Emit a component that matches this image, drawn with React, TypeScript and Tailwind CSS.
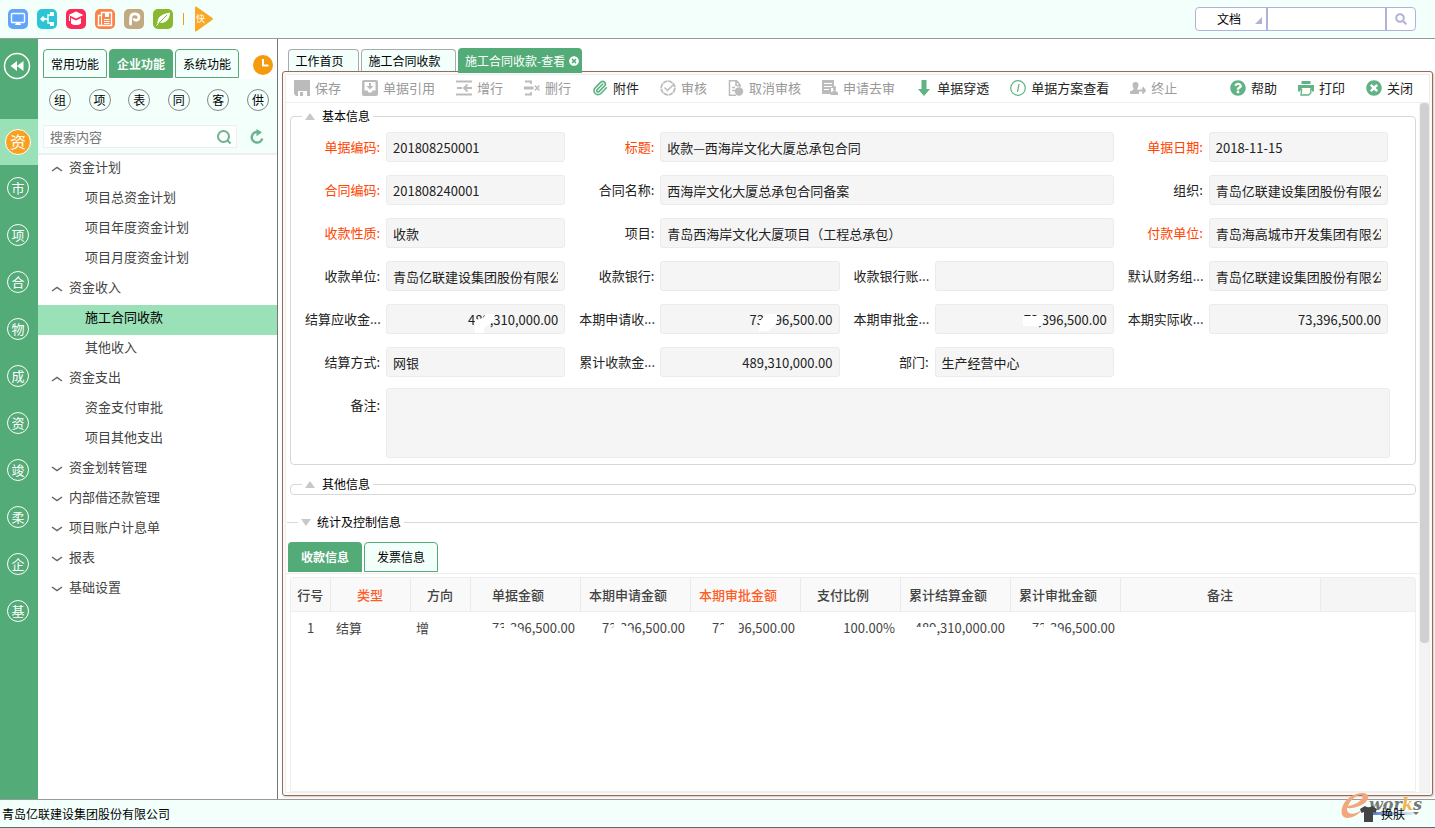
import { ReactNode } from "react";
import clsx from "clsx";
import { Paperclip } from "lucide-react";
import { FaQuestionCircle, FaTimesCircle } from "react-icons/fa";

const railItems = ["市", "项", "合", "物", "成", "资", "竣", "柔", "企", "基"];
const quickItems = ["组", "项", "表", "同", "客", "供"];

const tree = [
    { title: "资金计划", open: true, children: ["项目总资金计划", "项目年度资金计划", "项目月度资金计划"] },
    { title: "资金收入", open: true, children: ["施工合同收款", "其他收入"] },
    { title: "资金支出", open: true, children: ["资金支付审批", "项目其他支出"] },
    { title: "资金划转管理", open: false, children: [] },
    { title: "内部借还款管理", open: false, children: [] },
    { title: "项目账户计息单", open: false, children: [] },
    { title: "报表", open: false, children: [] },
    { title: "基础设置", open: false, children: [] },
];

type FieldData = {
    label: string;
    value: string;
    required?: boolean;
    wide?: boolean;
    number?: boolean;
    mask?: string;
};

const fields: FieldData[] = [
    { label: "单据编码:", value: "201808250001", required: true },
    { label: "标题:", value: "收款—西海岸文化大厦总承包合同", required: true, wide: true },
    { label: "单据日期:", value: "2018-11-15", required: true },
    { label: "合同编码:", value: "201808240001", required: true },
    { label: "合同名称:", value: "西海岸文化大厦总承包合同备案", wide: true },
    { label: "组织:", value: "青岛亿联建设集团股份有限公司" },
    { label: "收款性质:", value: "收款", required: true },
    { label: "项目:", value: "青岛西海岸文化大厦项目（工程总承包）", wide: true },
    { label: "付款单位:", value: "青岛海高城市开发集团有限公司", required: true },
    { label: "收款单位:", value: "青岛亿联建设集团股份有限公司" },
    { label: "收款银行:", value: "" },
    { label: "收款银行账...", value: "" },
    { label: "默认财务组...", value: "青岛亿联建设集团股份有限公司" },
    { label: "结算应收金...", value: "489,310,000.00", number: true, mask: "20,16 28,14 31,10 40,10 38,18 29,24 29,29 20,29" },
    { label: "本期申请收...", value: "73,396,500.00", number: true, mask: "30,17 36,10 47,10 47,19 38,27 29,27" },
    { label: "本期审批金...", value: "73,396,500.00", number: true, mask: "19,12 40,12 40,18 37,22 19,22" },
    { label: "本期实际收...", value: "73,396,500.00", number: true },
    { label: "结算方式:", value: "网银" },
    { label: "累计收款金...", value: "489,310,000.00", number: true },
    { label: "部门:", value: "生产经营中心" },
];

const columns = [
    { title: "行号", width: "w-[39px]" },
    { title: "类型", width: "w-[80px]", required: true },
    { title: "方向", width: "w-[60px]" },
    { title: "单据金额", width: "w-[110px]", number: true },
    { title: "本期申请金额", width: "w-[110px]", number: true },
    { title: "本期审批金额", width: "w-[110px]", required: true, number: true },
    { title: "支付比例", width: "w-[100px]", number: true },
    { title: "累计结算金额", width: "w-[110px]", number: true },
    { title: "累计审批金额", width: "w-[110px]", number: true },
    { title: "备注", width: "w-[200px]" },
];

const amounts = [
    { value: "73,396,500.00", mask: "20,16 34,16 34,10 38,10 40,15 48,15 53,19 49,28 20,28" },
    { value: "73,396,500.00", mask: "29,16 34,15 34,10 41,10 42,14 50,14 53,19 48,28 26,28" },
    { value: "73,396,500.00", mask: "28,15 34,14 34,8 48,8 50,15 46,28 24,28" },
    { value: "100.00%", mask: "" },
    { value: "489,310,000.00", mask: "14,15 37,15 37,26 14,26" },
    { value: "73,396,500.00", mask: "20,15 34,15 34,10 38,10 40,15 48,15 53,19 49,28 20,28" },
];

function Tile({ className, children }: { className: string; children: ReactNode }) {
    return (
        <button className={clsx("w-5 h-5 rounded-[5px]", className)}>
            <svg viewBox="0 0 20 20" className="w-5 h-5" fill="none" stroke="white">
                {children}
            </svg>
        </button>
    );
}

function TopBar() {
    return (
        <header className="flex items-center justify-between shrink-0 h-[39px] pl-2 pr-[19px] bg-[#f2fffb] border-b border-[#999]">
            <div className="flex items-center gap-[9px]">
                <Tile className="bg-[#63a4fb]">
                    <rect x="3.5" y="4.5" width="13" height="9" rx="1" strokeWidth="1.4" />
                    <path d="M8 14h4l1 2H7z" fill="white" stroke="none" />
                </Tile>
                <Tile className="bg-[#2cc5d5]">
                    <path d="M3 10l3-3 3 3-3 3z" fill="white" stroke="none" />
                    <path d="M8 10h3M15 6h-4v8h4" strokeWidth="1.4" />
                    <path d="M13 3h4v4h-4zM13 13h4v4h-4z" fill="white" stroke="none" />
                </Tile>
                <Tile className="bg-[#fb2a58]">
                    <path d="M10 2.5l7.5 3.5-7.5 3.5L2.5 6zM5 9l5 2.4L15 9v5.5c-2.5 2-7.5 2-10 0z" fill="white" stroke="none" />
                    <path d="M3.5 7v5" />
                </Tile>
                <Tile className="bg-[#fa8348]">
                    <path d="M3.5 16V6.5h3V3.5h10v13h-13z" strokeWidth="1.4" />
                    <path d="M6.5 6v10M9 10.5h5.5M9 12.5h5.5M9 14.5h5.5" />
                    <path d="M10 4h4v4h-4z" fill="white" stroke="none" />
                </Tile>
                <Tile className="bg-[#c1a981]">
                    <path d="M6.5 15c.3-3 0-5 .3-7 .6-4.500 8.200-4 8.200.2 0 3-3 3.800-4.800 2.300" strokeWidth="2.8" strokeLinecap="round" />
                </Tile>
                <Tile className="bg-[#88b830]">
                    <path d="M4.5 15c-.5-6 3-10 12.5-11.5C17 11 12 15 6.5 13.5z" fill="white" stroke="none" />
                    <path d="M3.5 16.5L14 6" stroke="#88b830" />
                    <path d="M3.5 16.5l2-2" />
                </Tile>
                <span className="w-px h-3 ml-px bg-[#f09a1a]" />
                <button aria-label="快捷" className="w-5 h-[26px] ml-px">
                    <svg viewBox="0 0 20 26" className="w-5 h-[26px]">
                        <path d="M1 1.5q0-1.5 1.5-.7L18.500 12q1 .9 0 1.8L2.5 25.2q-1.5.8-1.5-.7z" fill="#f9a825" />
                        <text x="2" y="16" fontSize="9" fill="white">快</text>
                    </svg>
                </button>
            </div>
            <form className="flex h-6 text-xs bg-white border border-[#b0b3d9] rounded-[4px]">
                <div className="flex items-end w-[72px] pr-1 border-r-2 border-[#b0b3d9]">
                    <select aria-label="搜索类型" className="appearance-none flex-1 h-full pl-[21px] outline-none">
                        <option>文档</option>
                    </select>
                    <svg viewBox="0 0 7 7" className="w-[7px] h-[7px] mb-1.5">
                        <path d="M7 0v7H0z" fill="#b0b3d9" />
                    </svg>
                </div>
                <input aria-label="搜索" className="w-[119px] px-1 outline-none border-r-2 border-[#b0b3d9]" />
                <button type="button" aria-label="查找" className="flex items-center justify-center w-7 text-[#b0b3d9]">
                    <svg viewBox="0 0 12 12" className="w-3 h-3" fill="none" stroke="currentColor" strokeWidth="2">
                        <circle cx="5" cy="5" r="3.8" />
                        <path d="M8 8l3.3 3.3" />
                    </svg>
                </button>
            </form>
        </header>
    );
}

function Rail() {
    return (
        <nav className="flex flex-col shrink-0 w-[38px] bg-[#53ab77] text-white">
            <button aria-label="收起" className="flex justify-center items-start h-20 pt-[13px] pr-1">
                <svg viewBox="0 0 28 28" className="w-7 h-7" fill="none" stroke="white">
                    <circle cx="14" cy="14" r="12.5" strokeWidth="1.5" />
                    <path d="M14 9v10l-6.5-5zM20.5 9v10L14 14z" fill="white" stroke="none" />
                </svg>
            </button>
            <button className="flex items-center justify-center h-[46px] bg-[#9be1b8]">
                <span className="flex items-center justify-center w-[26px] h-[26px] pb-0.5 mr-0.5 text-base leading-none rounded-full border border-white bg-[#f9a01f]">资</span>
            </button>
            {railItems.map((item) => (
                <button key={item} className="flex items-center justify-center h-[47px] pb-0.5">
                    <span className="flex items-center justify-center w-[22px] h-[22px] mr-0.5 text-[13px] leading-none rounded-full border border-white">{item}</span>
                </button>
            ))}
        </nav>
    );
}

function Chevron({ open }: { open: boolean }) {
    return (
        <svg viewBox="0 0 12 6" className="w-3 h-1.5 mt-1" fill="none" stroke="#666" strokeWidth="1.5">
            <path d={open ? "M1 5l5-3.5L11 5" : "M1 1l5 3.5L11 1"} />
        </svg>
    );
}

function Sidebar() {
    return (
        <aside className="flex flex-col shrink-0 w-[240px] bg-white border-r border-[#777]">
            <div className="flex items-end h-10 pb-px pl-[5px] gap-0.5 text-xs">
                <button className="w-16 h-[29px] border border-[#53ab77] rounded-t-[4px] bg-[#f2fffb]">常用功能</button>
                <button className="w-16 h-[29px] border border-[#53ab77] rounded-t-[4px] bg-[#53ab77] text-white font-bold">企业功能</button>
                <button className="w-16 h-[29px] border border-[#53ab77] rounded-t-[4px] bg-[#f2fffb]">系统功能</button>
                <button aria-label="历史" className="w-5 h-5 mb-[3px] ml-3">
                    <svg viewBox="0 0 20 20" className="w-5 h-5">
                        <circle cx="10" cy="10" r="10" fill="#f59a0c" />
                        <path d="M10 4v6.5h5.5" fill="none" stroke="white" strokeWidth="2" />
                    </svg>
                </button>
            </div>
            <div className="h-[76px] pt-2.5 bg-[#f2fffb] border-b-2 border-[#eee]">
                <div className="flex justify-between pl-[11px] pr-2">
                    {quickItems.map((item) => (
                        <button key={item} className="flex items-center justify-center w-[22px] h-[22px] text-xs leading-none border border-[#888] rounded-full">{item}</button>
                    ))}
                </div>
                <div className="flex items-center mt-3.5 pl-[5px] pr-3">
                    <div className="flex items-center flex-1 h-[23px] pl-1.5 pr-1 bg-white border border-[#eee]">
                        <input aria-label="搜索内容" placeholder="搜索内容" className="flex-1 min-w-0 text-[13px] outline-none placeholder:text-[#777]" />
                        <svg viewBox="0 0 16 16" className="w-4 h-4" fill="none" stroke="#6ab48c" strokeWidth="2">
                            <circle cx="7.5" cy="7.5" r="5.5" />
                            <path d="M11.5 11.5l3 3" />
                        </svg>
                    </div>
                    <button aria-label="刷新" className="w-4 h-4 ml-3">
                        <svg viewBox="0 0 16 16" className="w-4 h-4" fill="none" stroke="#6ab48c" strokeWidth="2.5">
                            <path d="M13.2 9.5a5.3 5.3 0 1 1-4.7-6.5" />
                            <path d="M7.5 0l5.5 3.2-5.5 4z" fill="#6ab48c" stroke="none" />
                        </svg>
                    </button>
                </div>
            </div>
            <ul className="text-[13px] text-[#444]">
                {tree.map((group) => (
                    <li key={group.title}>
                        <button className="flex items-center w-full h-[30px] pb-1.5 pl-[13px] gap-1.5">
                            <Chevron open={group.open} />
                            {group.title}
                        </button>
                        {group.children.map((child) => (
                            <a
                                key={child}
                                href="#"
                                className={clsx("flex items-center h-[30px] pb-1.5 pl-[47px]", child === "施工合同收款" && "bg-[#9be1b8] text-black")}
                            >
                                {child}
                            </a>
                        ))}
                    </li>
                ))}
            </ul>
        </aside>
    );
}

function Tool({ label, disabled, children }: { label: string; disabled?: boolean; children: ReactNode }) {
    return (
        <button disabled={disabled} className={clsx("flex items-center gap-[5px]", disabled ? "text-[#999]" : "text-[#222]")}>
            <span className={clsx("flex items-center justify-center w-4 h-4 text-base", disabled ? "text-[#bbb]" : "text-[#5fb384]")}>{children}</span>
            {label}
        </button>
    );
}

function Glyph({ children }: { children: ReactNode }) {
    return (
        <svg viewBox="0 0 16 16" className="w-4 h-4" fill="none" stroke="currentColor" strokeWidth="1.5">
            {children}
        </svg>
    );
}

function Toolbar() {
    return (
        <div className="flex items-center justify-between shrink-0 h-7 pb-0.5 pl-2 pr-4 text-[13px] whitespace-nowrap border-b border-[#eee]">
            <div className="flex gap-[21px]">
                <Tool label="保存" disabled>
                    <Glyph>
                        <path fillRule="evenodd" d="M0 0h16v16h-3v-5H4v5H2l-2-2zM6 12h3v4H6z" fill="currentColor" stroke="none" />
                    </Glyph>
                </Tool>
                <Tool label="单据引用" disabled>
                    <Glyph>
                        <path fillRule="evenodd" d="M2 0h12q2 0 2 2v12q0 2-2 2H2q-2 0-2-2V2q0-2 2-2zM2.5 2v8.5h3l1 2h3l1-2h3V2zM7 3h2v3h2.5L8 9.5 4.5 6H7z" fill="currentColor" stroke="none" />
                    </Glyph>
                </Tool>
                <Tool label="增行" disabled>
                    <Glyph>
                        <path d="M0 1.5h16M0 14.5h16M1 8h5M8 8h8M11.5 4.5L8 8l3.5 3.5" strokeWidth="1.8" />
                    </Glyph>
                </Tool>
                <Tool label="删行" disabled>
                    <Glyph>
                        <path d="M1 1.5h6v2.5M7 12v2.5H1" strokeWidth="1.8" />
                        <path d="M0 8h9.500" strokeWidth="3" />
                        <path d="M11 5.5l4.5 5M15.5 5.5l-4.5 5" strokeWidth="1.5" />
                    </Glyph>
                </Tool>
                <Tool label="附件">
                    <Paperclip size={16} strokeWidth={2.5} />
                </Tool>
                <Tool label="审核" disabled>
                    <Glyph>
                        <circle cx="8" cy="8" r="6.800" strokeDasharray="4.700 .6" strokeWidth="1.800" />
                        <path d="M4.500 7.500l3 3L13 5" />
                    </Glyph>
                </Tool>
                <Tool label="取消审核" disabled>
                    <Glyph>
                        <path d="M8 15.200H1.500V.8h7l3.500 4V7M8 1v4.500h4M4 7.500h3M4 10.500h3" />
                        <circle cx="11" cy="11.500" r="4.200" fill="currentColor" stroke="none" />
                    </Glyph>
                </Tool>
                <Tool label="申请去审" disabled>
                    <Glyph>
                        <path fillRule="evenodd" d="M0 0h12v8H9v6H0zM2 3v1h8V3zM2 6v1h8V6zM2 9v1h5V9z" fill="currentColor" stroke="none" />
                        <path d="M11 7.500a1.500 1.500 0 0 1 3 0L13.500 11l2.500 1.500V15H8.500v-2.500l3-1.500z" fill="currentColor" stroke="none" />
                    </Glyph>
                </Tool>
                <Tool label="单据穿透">
                    <Glyph>
                        <path d="M5.500 0h5v9H14l-6 7-6-7h3.500z" fill="currentColor" stroke="none" />
                    </Glyph>
                </Tool>
                <Tool label="单据方案查看">
                    <Glyph>
                        <circle cx="8" cy="8" r="7.300" strokeWidth="1.200" />
                        <path d="M9 4L7.500 12" strokeWidth="1.300" />
                    </Glyph>
                </Tool>
                <Tool label="终止" disabled>
                    <Glyph>
                        <path d="M2.500 5a3 3 0 0 1 6 0c0 2-1.200 3-1.200 4.500l1.700.5v4H0v-2.500l3.700-2C3.700 8 2.500 7 2.500 5z" fill="currentColor" stroke="none" />
                        <path d="M9 10.500h6M12.500 7.500l2.500 3-2.500 3" strokeWidth="2" />
                    </Glyph>
                </Tool>
            </div>
            <div className="flex gap-[21px]">
                <Tool label="帮助">
                    <FaQuestionCircle />
                </Tool>
                <Tool label="打印">
                    <Glyph>
                        <path d="M3.500 1h9v3h-9zM0 5h16v6.500h-2L12.500 8h-9L2 11.500H0z" fill="currentColor" stroke="none" />
                        <path d="M3.700 8.500L3 15h7.500l2.300-2V8.500" strokeWidth="1.300" />
                    </Glyph>
                </Tool>
                <Tool label="关闭">
                    <FaTimesCircle />
                </Tool>
            </div>
        </div>
    );
}

function Legend({ title, down }: { title: string; down?: boolean }) {
    return (
        <legend className={clsx("flex items-center h-[18px] ml-[11px] px-[3px] text-xs", down ? "gap-1.5" : "gap-[7px]")}>
            <svg viewBox="0 0 10 7" className="w-2.5 h-[7px]">
                <path d={down ? "M0 0h10L5 7z" : "M0 7h10L5 0z"} fill="#c8c8c8" />
            </svg>
            {title}
        </legend>
    );
}

function Mask({ points, className }: { points: string; className: string }) {
    return (
        <svg className={clsx("absolute top-0 right-0 w-[110px]", className)} fill="white">
            <polygon points={points} />
        </svg>
    );
}

function Field({ field, id }: { field: FieldData; id: string }) {
    return (
        <div className={clsx("flex gap-1.5", field.wide && "col-span-2")}>
            <label htmlFor={id} className={clsx("w-[75px] shrink-0 leading-[29px] text-right whitespace-nowrap", field.required && "text-[#ff4500]")}>
                {field.label}
            </label>
            <div className="relative flex-1 min-w-0">
                <input
                    id={id}
                    readOnly
                    value={field.value}
                    className={clsx("w-full h-[30px] px-1.5 bg-[#f5f5f5] border border-[#ebebeb] rounded-[3px] outline-none", field.number && "text-right")}
                />
                {field.mask && <Mask points={field.mask} className="h-[30px]" />}
            </div>
        </div>
    );
}

function DetailTable() {
    return (
        <div className="flex-1 min-h-0 ml-1 mr-[3px] mt-[3px] overflow-hidden border border-[#eee] rounded-t-[3px] text-[13px] text-[#444]">
            <table className="w-full table-fixed">
                <thead>
                    <tr className="h-[33px] bg-[#f9f9f9] border-b border-[#eee]">
                        {columns.map((col) => (
                            <th
                                key={col.title}
                                className={clsx("p-0 font-medium border-r border-[#eaeaea]", col.width, col.number && "pr-3.5", col.required && "text-[#ff5c26]")}
                            >
                                {col.title}
                            </th>
                        ))}
                        <th className="bg-[#f5f5f5]" />
                    </tr>
                </thead>
                <tbody>
                    <tr className="h-8">
                        <td className="text-center">1</td>
                        <td className="pl-1.5">结算</td>
                        <td className="pl-1.5">增</td>
                        {amounts.map((amount, i) => (
                            <td key={i} className="relative pr-[5px] text-right">
                                {amount.value}
                                {amount.mask && <Mask points={amount.mask} className="h-8" />}
                            </td>
                        ))}
                        <td />
                        <td />
                    </tr>
                </tbody>
            </table>
        </div>
    );
}

function Main() {
    return (
        <main className="flex flex-col flex-1 min-w-0 pl-1 pr-0.5 pb-[3px] bg-white">
            <div className="flex items-end shrink-0 h-8 pl-1.5 gap-0.5 text-xs">
                <button className="h-[22px] w-[71px] pr-2 border border-b-0 border-[#aaa] rounded-t-[4px] bg-[#f2fffb]">工作首页</button>
                <button className="h-[22px] w-[95px] pr-2 border border-b-0 border-[#aaa] rounded-t-[4px] bg-[#f2fffb]">施工合同收款</button>
                <button className="relative flex items-center h-[25px] w-[124px] pl-[7px] gap-1 -mb-0.5 rounded-t-[4px] bg-[#53ab77] text-white whitespace-nowrap">
                    施工合同收款-查看
                    <FaTimesCircle className="text-[10px]" />
                </button>
            </div>
            <div className="flex flex-col flex-1 min-h-0 p-0.5 bg-[#fcf9f6] border border-[#8c6f62] rounded-[3px] shadow-[1px_1px_2px_#d8c8bc]">
                <div className="flex flex-col flex-1 min-h-0 bg-white border border-[#eee]">
                    <Toolbar />
                    <div className="flex flex-1 min-h-0">
                        <div className="flex flex-col flex-1 min-w-0">
                            <fieldset className="shrink-0 ml-1 mr-[3px] mt-1 pb-1.5 border border-[#d8d8d8] rounded-[4px]">
                                <Legend title="基本信息" />
                                <div className="pl-3.5 pr-[27px] pt-[7px] text-[13px] text-[#222]">
                                    <div className="grid grid-cols-4 gap-x-3.5 gap-y-[13px]">
                                        {fields.map((field, i) => (
                                            <Field key={field.label} field={field} id={`field-${i}`} />
                                        ))}
                                    </div>
                                    <div className="flex gap-1.5 mt-[11px] -mr-0.5">
                                        <label htmlFor="remark" className="w-[75px] shrink-0 leading-[34px] text-right">备注:</label>
                                        <textarea id="remark" readOnly className="flex-1 h-[70px] bg-[#f5f5f5] border border-[#ebebeb] rounded-[3px] resize-none outline-none" />
                                    </div>
                                </div>
                            </fieldset>
                            <fieldset className="shrink-0 ml-1 mr-[3px] mt-2.5 pb-px border border-[#d8d8d8] rounded-[4px]">
                                <Legend title="其他信息" />
                            </fieldset>
                            <fieldset className="shrink-0 mx-px mt-[18px] border-t border-[#d8d8d8]">
                                <Legend title="统计及控制信息" down />
                            </fieldset>
                            <div className="flex shrink-0 mt-[11px] pb-px pl-0.5 gap-0.5 text-xs border-b border-[#eee]">
                                <button className="w-[74px] h-[30px] rounded-t-[4px] bg-[#53ab77] text-white font-bold">收款信息</button>
                                <button className="w-[74px] h-[30px] border border-[#53ab77] rounded-t-[4px] bg-[#f2fffb]">发票信息</button>
                            </div>
                            <DetailTable />
                        </div>
                        <div className="w-2.5 shrink-0 pl-px bg-[#f3f3f3]">
                            <div className="h-[540px] rounded-[4px] bg-[#d0d0d0]" />
                        </div>
                    </div>
                </div>
            </div>
        </main>
    );
}

function Footer() {
    return (
        <footer className="relative flex items-center justify-between shrink-0 h-[29px] pl-0.5 pr-4 text-xs bg-[#f2fffb] border-t border-b border-t-[#999] border-b-[#666]">
            <span>青岛亿联建设集团股份有限公司</span>
            <svg viewBox="0 0 90 30" className="absolute right-[7px] -top-2 w-[90px] h-[30px]" fontFamily="DejaVu Serif, serif" fontStyle="italic" fontWeight="bold">
                <defs>
                    <linearGradient id="swoosh">
                        <stop offset="0" stopColor="#3f66c0" />
                        <stop offset="1" stopColor="#f2fffb" />
                    </linearGradient>
                </defs>
                <path d="M26 20h56l-8 3H28z" fill="url(#swoosh)" />
                <path fillRule="evenodd" d="M9 16c9 1 20-4 21-10C31-1 20 0 12 5 3 11 0 25 9 26c6 0 12-4 16-9-6 5-13 6-15 3-1-1-1-2-1-4zm1-2c2-6 9-12 14-11 3 3-5 10-14 11z" fill="#f3a67c" />
                <text x="31" y="18" fontSize="16" fill="#777">wor<tspan fill="#f5b04a">k</tspan>s</text>
            </svg>
            <button className="relative flex items-center gap-1">
                <svg viewBox="0 0 17 16" className="w-[17px] h-4">
                    <path d="M5 0q3.500 2.500 7 0l5 3-1.500 4-2.500-1v10H4V6L1.500 7 0 3z" fill="#444" />
                </svg>
                换肤
                <svg viewBox="0 0 6 3" className="w-1.5 h-[3px] ml-1">
                    <path d="M0 0h6L3 3z" fill="#777" />
                </svg>
            </button>
        </footer>
    );
}

function App() {
    return (
        <div className="flex flex-col h-screen overflow-hidden text-black font-['Noto_Sans_CJK_SC','Liberation_Sans',sans-serif]">
            <TopBar />
            <div className="flex flex-1 min-h-0">
                <Rail />
                <Sidebar />
                <Main />
            </div>
            <Footer />
        </div>
    );
}

export default App;
